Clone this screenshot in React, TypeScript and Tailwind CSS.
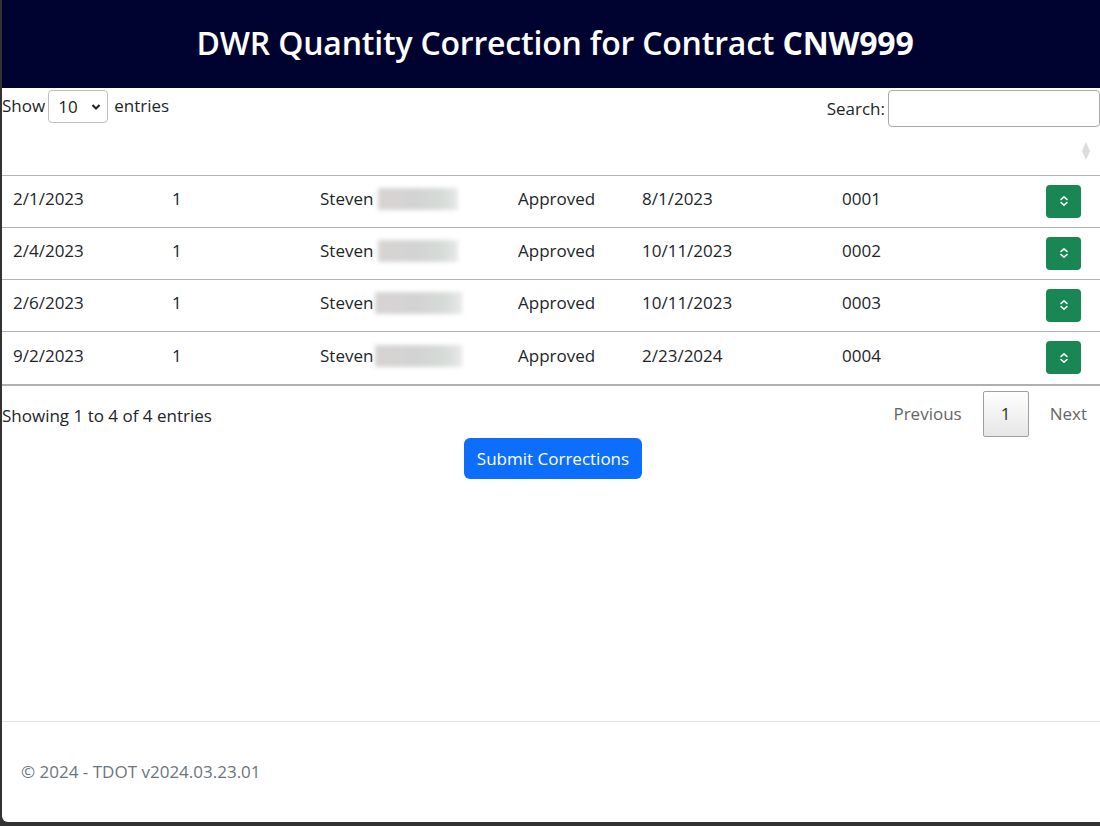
import React from "react";

const rows = [
  { date: "2/1/2023", qty: "1", status: "Approved", d2: "8/1/2023", num: "0001", shift: 0 },
  { date: "2/4/2023", qty: "1", status: "Approved", d2: "10/11/2023", num: "0002", shift: 0 },
  { date: "2/6/2023", qty: "1", status: "Approved", d2: "10/11/2023", num: "0003", shift: 1 },
  { date: "9/2/2023", qty: "1", status: "Approved", d2: "2/23/2024", num: "0004", shift: 1 },
];

function ExpandIcon() {
  return (
    <svg width="10" height="12" viewBox="0 0 10 12" fill="none" stroke="white" strokeWidth="1.6" strokeLinecap="round" strokeLinejoin="round">
      <path d="M2 4.5 L5 1.8 L8 4.5" />
      <path d="M2 7.5 L5 10.2 L8 7.5" />
    </svg>
  );
}

export default function App() {
  return (
    <div
      className="w-[1100px] h-[826px] bg-[#333333] overflow-hidden text-[#212529]"
      style={{ fontFamily: '"Open Sans", "Noto Sans", sans-serif' }}
    >
      <div className="ml-[2px] h-[822px] bg-white rounded-bl-[6px] flex flex-col overflow-hidden">
        <header className="h-[88px] bg-[#00032f] flex items-center justify-center pb-[3px]">
          <h1 className="text-white text-[32px] font-semibold tracking-[-0.2px] pl-[8px]">
            DWR Quantity Correction for Contract <span className="font-bold">CNW999</span>
          </h1>
        </header>

        <div className="flex justify-between items-start h-[40px] text-[17px]">
          <div className="flex items-center h-[36px]">
            <span>Show</span>
            <div className="ml-[3px] mr-[6px] mt-[1px] w-[60px] h-[33px] border border-[#bfbfbf] rounded-[4px] flex items-center justify-between pl-[9px] pr-[6px]">
              <span>10</span>
              <svg width="10" height="8" viewBox="0 0 10 8" fill="none" stroke="#222" strokeWidth="2"><path d="M1.5 2 L5 5.5 L8.5 2" /></svg>
            </div>
            <span>entries</span>
          </div>
          <div className="flex items-center h-[39px] mt-[1px]">
            <span className="mr-[3px]">Search:</span>
            <div className="w-[212px] h-[37px] border border-[#aaaaaa] rounded-[4px]" />
          </div>
        </div>

        <div className="h-[48px] border-b border-[#b5b5b5] flex items-center justify-end pr-[9px] pb-[2px]">
          <svg width="10" height="20" viewBox="0 0 10 20"><path d="M5 1 L9 10 L5 19 L1 10 Z" fill="#dcdcdc" /></svg>
        </div>

        <div className="border-b-2 border-[#b0b0b0]">
          {rows.map((r, i) => (
            <div
              key={i}
              className={`grid grid-cols-[159px_148px_198px_124px_200px_1fr] items-center h-[52px] text-[17px] ${i < rows.length - 1 ? "border-b border-[#b5b5b5]" : ""}`}
            >
              <div className="pl-[11px] pb-[5px]">{r.date}</div>
              <div className="pl-[11px] pb-[5px]">{r.qty}</div>
              <div className="pl-[11px] pb-[5px] flex items-center">
                <span>Steven</span>
                <div className={`${r.shift ? "ml-[2px] w-[87px]" : "ml-[5px] w-[80px]"} h-[22px] bg-[linear-gradient(90deg,#d4cfcf,#cfcfcf_50%,#d2d8d4_80%,#e6e6e6)] blur-[2px] opacity-90`} />
              </div>
              <div className="pl-[11px] pb-[5px]">{r.status}</div>
              <div className="pl-[11px] pb-[5px]">{r.d2}</div>
              <div className="pl-[11px] pb-[5px] flex items-center justify-between">
                <span>{r.num}</span>
                <button className="mr-[19px] w-[35px] h-[33px] bg-[#198754] rounded-[4px] flex items-center justify-center mt-[4px]">
                  <ExpandIcon />
                </button>
              </div>
            </div>
          ))}
        </div>

        <div className="flex justify-between items-start text-[17px] mt-[5px]">
          <div className="pt-[12px]">Showing 1 to 4 of 4 entries</div>
          <div className="flex items-center text-[#666666]">
            <span className="mr-[21px]">Previous</span>
            <span className="w-[46px] h-[46px] border border-[#a0a0a0] rounded-[2px] bg-[linear-gradient(#ffffff,#e6e6e6)] flex items-center justify-center text-[#333333]">1</span>
            <span className="ml-[21px] mr-[13px]">Next</span>
          </div>
        </div>

        <div className="flex justify-center">
          <button className="mt-[1px] h-[41px] px-[13px] bg-[#0d6efd] text-white text-[17px] rounded-[6px] ml-[4px]">
            Submit Corrections
          </button>
        </div>

        <div className="flex-1" />

        <footer className="h-[101px] border-t border-[#dee2e6] flex items-center pl-[19px] text-[17px] text-[#6c757d]">
          © 2024 - TDOT v2024.03.23.01
        </footer>
      </div>
    </div>
  );
}
